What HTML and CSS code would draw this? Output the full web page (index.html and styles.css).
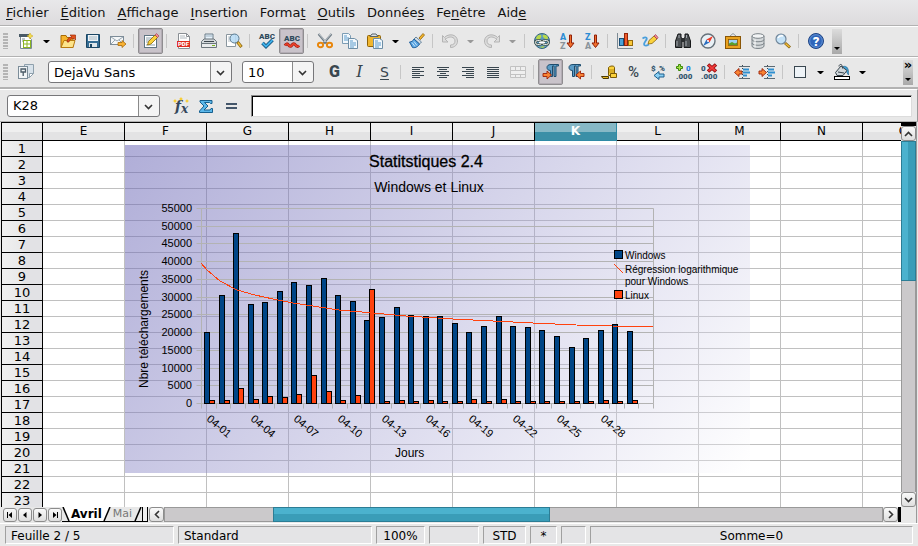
FILE: index.html
```html
<!DOCTYPE html>
<html lang="fr">
<head>
    <meta charset="UTF-8">
    <meta name="viewport" content="width=device-width, initial-scale=1.0">
    <title>Statistiques - Tableur</title>
    <link rel="stylesheet" href="styles.css">
</head>
<body>
    <nav class="menubar">
        <a href="#"><u>F</u>ichier</a>
        <a href="#"><u>É</u>dition</a>
        <a href="#"><u>A</u>ffichage</a>
        <a href="#"><u>I</u>nsertion</a>
        <a href="#">Forma<u>t</u></a>
        <a href="#"><u>O</u>utils</a>
        <a href="#">Donnée<u>s</u></a>
        <a href="#">Fe<u>n</u>être</a>
        <a href="#">Aid<u>e</u></a>
    </nav>

    <div class="toolbar">
        <span class="grip"></span>
        <button class="tool" aria-label="Nouveau"><svg viewBox="0 0 16 16"><path d="M2.500 3.500h8l3 3v9h-11z" fill="#fff" stroke="#7a8a94"/><path d="M1 1h10v3H1z" fill="#4a5a66"/><path d="M4 6h3M4 8h2" stroke="#7a8a94"/><rect x="5.500" y="7.500" width="7" height="7" fill="#fff" stroke="#8ab520"/><path d="M9 7v8M5 11h8" stroke="#8ab520"/><path d="M12 0l1 2 2 1-2 1-1 2-1-2-2-1 2-1z" fill="#f5e050" stroke="#c8a010" stroke-width=".5"/></svg></button>
        <button class="drop" aria-label="Types de document"></button>
        <button class="tool" aria-label="Ouvrir"><svg viewBox="0 0 16 16"><path d="M1 14.500V2.500h5l1 2h6v10z" fill="#f6b52c" stroke="#a86c08"/><path d="M1 14.500l3-7h11l-2 7z" fill="#fde48a" stroke="#b87a10"/><path d="M7 9c0-3 2-5 5-5l-2-2h5.500v5L14 5.500C11 5.500 9 7 9 9z" fill="#e2521c" stroke="#9c2c08" stroke-width=".7"/></svg></button>
        <button class="tool" aria-label="Enregistrer"><svg viewBox="0 0 16 16"><path d="M1.500 1.500h13v13h-13z" fill="#356d94" stroke="#1b4663"/><rect x="3" y="2" width="10" height="6" fill="#eef3f6"/><path d="M4 4h8M4 6h8" stroke="#a8b8c2"/><rect x="4" y="10" width="8" height="4" fill="#dfe6ea"/><rect x="5" y="11" width="2" height="3" fill="#1b4663"/></svg></button>
        <button class="tool" aria-label="Envoyer"><svg viewBox="0 0 16 16"><rect x=".5" y="3.500" width="13" height="8" fill="#f5f7f8" stroke="#7d8c98"/><path d="M1 4l6 4 6-4M1 11l4-4M13 11L9 7" fill="none" stroke="#9aa8b2"/><path d="M8 9.500h4v-2l4 3.500-4 3.500v-2H8z" fill="#f9b233" stroke="#a8690a" stroke-width=".8"/></svg></button>
        <span class="sep"></span>
        <button class="tool on" aria-label="Éditer le fichier"><svg viewBox="0 0 16 16"><rect x="1.500" y="2.500" width="12" height="12" fill="#fff" stroke="#5f7482"/><path d="M3 5h6M3 7h5M3 9h3M3 12h9" stroke="#8fa3af"/><path d="M4.500 12l1-3.500L12 2l2.500 2.500L8 11z" fill="#fbd23c" stroke="#8a6508" stroke-width=".8"/><path d="M12 2l1.500-1.500L16 3l-1.500 1.500z" fill="#f08c96" stroke="#a03848" stroke-width=".6"/></svg></button>
        <span class="sep"></span>
        <button class="tool" aria-label="Exporter en PDF"><svg viewBox="0 0 16 16"><path d="M2.500.5h8l3 3v12h-11z" fill="#fff" stroke="#8a8f94"/><path d="M10.500.5v3h3" fill="none" stroke="#8a8f94"/><path d="M4 3h5M4 5h7" stroke="#b0b8be"/><rect x="1" y="8" width="13" height="6" fill="#e02b20"/><text x="7.500" y="13" text-anchor="middle" class="ico-pdf">PDF</text></svg></button>
        <button class="tool" aria-label="Imprimer"><svg viewBox="0 0 16 16"><path d="M4 6V1h8v5" fill="#e6f1fa" stroke="#6a7c88"/><path d="M5 3h6" stroke="#9fb4c2"/><path d="M.5 8.500l2.500-2.500h10l2.500 2.500v3H.5z" fill="#d2d7da" stroke="#6b757b"/><path d="M3 8.500h10" stroke="#3c464c"/><path d="M.5 10.500h15v4H.5z" fill="#e9ebec" stroke="#6b757b"/><rect x="11" y="12" width="3" height="1" fill="#79b520"/></svg></button>
        <button class="tool" aria-label="Aperçu"><svg viewBox="0 0 16 16"><path d="M.5 1.500h9v12h-9z" fill="#fff" stroke="#8a969e"/><path d="M2 4h3M2 6h3M2 8h3" stroke="#b4bec4"/><circle cx="8.500" cy="5.500" r="4.500" fill="#b9dcf4" fill-opacity=".9" stroke="#5c7c92"/><path d="M11.500 9l4 5" stroke="#8a6510" stroke-width="3"/><path d="M12 9.500l3 4" stroke="#f0bc3a" stroke-width="1.500"/></svg></button>
        <span class="sep"></span>
        <button class="tool" aria-label="Orthographe"><svg viewBox="0 0 16 16"><text x="8" y="6" text-anchor="middle" class="ico-abc">ABC</text><path d="M3.500 10l3.500 3.500 6.500-6.500" fill="none" stroke="#13517c" stroke-width="3.600"/><path d="M3.500 10l3.500 3.500 6.500-6.500" fill="none" stroke="#3fb1ea" stroke-width="1.800"/></svg></button>
        <button class="tool on" aria-label="Vérification automatique"><svg viewBox="0 0 16 16"><text x="8" y="8" text-anchor="middle" class="ico-abc">ABC</text><path d="M1 12.500q1.800-3 3.500-.5t3.500 0 3.500 0 3.500.5" fill="none" stroke="#a81c10" stroke-width="3"/><path d="M1 12.500q1.800-3 3.500-.5t3.500 0 3.500 0 3.500.5" fill="none" stroke="#f0452c" stroke-width="1.400"/></svg></button>
        <span class="sep"></span>
        <button class="tool" aria-label="Couper"><svg viewBox="0 0 16 16"><path d="M1.500 1l8 9.500M14.500 1l-8 9.500" stroke="#6e7b84" stroke-width="2"/><path d="M2 1l7 8M14 1L7 9" stroke="#e4eaee" stroke-width=".7"/><ellipse cx="3.500" cy="12" rx="2.600" ry="2.200" fill="none" stroke="#e8860c" stroke-width="1.900"/><ellipse cx="12.500" cy="12" rx="2.600" ry="2.200" fill="none" stroke="#e8860c" stroke-width="1.900"/></svg></button>
        <button class="tool" aria-label="Copier"><svg viewBox="0 0 16 16"><path d="M.5.5h6l2 2v8h-8z" fill="#f2f8fc" stroke="#7d9db4"/><path d="M2 3h3M2 5h5M2 7h5" stroke="#5a9bcc"/><path d="M6.500 5.500h6l3 2v8h-9z" fill="#f2f8fc" stroke="#6d8ea6"/><path d="M8 8h3M8 10h6M8 12h6M8 14h4" stroke="#5a9bcc"/></svg></button>
        <button class="tool" aria-label="Coller"><svg viewBox="0 0 16 16"><rect x=".5" y="2.500" width="13" height="11" rx="1" fill="#f0b62e" stroke="#8f6206"/><path d="M3 3.500L5 1h4l2 2.500z" fill="#dfe3e6" stroke="#59646b"/><path d="M6.500 5.500h6l3 2v8h-9z" fill="#f2f8fc" stroke="#6d8ea6"/><path d="M8 8h3M8 10h6M8 12h6M8 14h4" stroke="#5a9bcc"/></svg></button>
        <button class="drop" aria-label="Options de collage"></button>
        <button class="tool" aria-label="Appliquer le format"><svg viewBox="0 0 16 16"><path d="M10 5l4-4.500 1.500 1.500-4 4.500z" fill="#f5b52a" stroke="#8f6206" stroke-width=".8"/><path d="M7 4l5.500 5-2 2L5 6z" fill="#d3dde4" stroke="#4b6f8c" stroke-width=".8"/><path d="M5 6l5.500 5c-2 3.500-5 4-7 3.500L.5 9c2 0 3.500-1 4.500-3z" fill="#5aa5e2" stroke="#1f5f9c"/><path d="M3 9.500l3 4M5 8.500l3 4" stroke="#c4e2f8"/></svg></button>
        <span class="sep"></span>
        <button class="tool" aria-label="Annuler" disabled><svg viewBox="0 0 16 16"><path d="M3 6l3 3H.500V2.500l2 2C6 .500 15 .500 15.500 8c0 4-3 6.500-7 6.500V12c3 0 4.500-1.500 4.500-4 0-4.500-6-5-8.500-2.500z" fill="#dcdcdc" stroke="#b4b4b4"/></svg></button>
        <button class="drop off" aria-label="Liste d'annulation" disabled></button>
        <button class="tool" aria-label="Rétablir" disabled><svg viewBox="0 0 16 16"><path d="M13 6l-3 3h5.500V2.500l-2 2C10 .500 1 .500.500 8c0 4 3 6.500 7 6.500V12C4.500 12 3 10.500 3 8c0-4.500 6-5 8.500-2.500z" fill="#dcdcdc" stroke="#b4b4b4"/></svg></button>
        <button class="drop off" aria-label="Liste de rétablissement" disabled></button>
        <span class="sep"></span>
        <button class="tool" aria-label="Hyperlien"><svg viewBox="0 0 16 16"><circle cx="8" cy="8" r="7.500" fill="#5b98c0" stroke="#34647f"/><path d="M2 5c1-3 4-4 5-3s0 3-1 4-4 1-4-1zM9 2c2-1 5 1 5 3s-3 1-4 0-2-2-1-3zM5 14l6-1-2 2z" fill="#b8d84a"/><rect x="1.500" y="7.500" width="6" height="4" rx="2" fill="none" stroke="#4c5a50" stroke-width="2.400"/><rect x="8.500" y="7.500" width="6" height="4" rx="2" fill="none" stroke="#4c5a50" stroke-width="2.400"/><rect x="1.500" y="7.500" width="6" height="4" rx="2" fill="none" stroke="#e6ecef"/><rect x="8.500" y="7.500" width="6" height="4" rx="2" fill="none" stroke="#e6ecef"/><path d="M5 9.500h6" stroke="#fff" stroke-width="1.400"/></svg></button>
        <button class="tool" aria-label="Tri croissant"><svg viewBox="0 0 16 16"><text x="1" y="7" class="ico-sort blue">A</text><text x="1" y="16" class="ico-sort">Z</text><path d="M10.500 2h2v8h2.500l-3.500 4.500L8 10h2.500z" fill="#f0702c" stroke="#8f1e08"/></svg></button>
        <button class="tool" aria-label="Tri décroissant"><svg viewBox="0 0 16 16"><text x="1" y="7" class="ico-sort blue">Z</text><text x="1" y="16" class="ico-sort">A</text><path d="M10.500 2h2v8h2.500l-3.500 4.500L8 10h2.500z" fill="#f0702c" stroke="#8f1e08"/></svg></button>
        <span class="sep"></span>
        <button class="tool" aria-label="Diagramme"><svg viewBox="0 0 16 16"><path d="M.5 0v15.500H16" fill="none" stroke="#7c8a94"/><rect x="2.500" y="5.500" width="4" height="7" fill="#4ba3d8" stroke="#1b5078"/><rect x="7.500" y=".5" width="3" height="12" fill="#ee5b2a" stroke="#93240a"/><rect x="11.500" y="7.500" width="4" height="5" fill="#fbc93a" stroke="#94690a"/></svg></button>
        <button class="tool" aria-label="Dessin"><svg viewBox="0 0 16 16"><path d="M.5 5.500c3-2 5-1 4 1s-4 5-1.500 6c2 .500 3-.500 4-1" fill="none" stroke="#4a9fdc" stroke-width="1.800"/><path d="M6 11l1-3.500L12 3l3 3-5 4.500z" fill="#fbd23c" stroke="#8a6508" stroke-width=".8"/><path d="M12 3l1.500-1.500 2.500 3L15 6z" fill="#f08c96" stroke="#a03848" stroke-width=".7"/></svg></button>
        <span class="sep"></span>
        <button class="tool" aria-label="Rechercher"><svg viewBox="0 0 16 16"><path d="M3 1h3v3l1 2v8.500H.5V8zM13 1h-3v3L9 6v8.500h6.500V8z" fill="#4b4f52" stroke="#17191a"/><path d="M6 5h4v4H6z" fill="#2b2e30"/><path d="M2 8v5M11 8v5M4 2v3M11.500 2v3" stroke="#a3a9ad"/></svg></button>
        <button class="tool" aria-label="Navigateur"><svg viewBox="0 0 16 16"><circle cx="8" cy="8" r="7" fill="#e9f1f6" stroke="#66727a" stroke-width="1.400"/><path d="M13 3L9.500 9.500 6.500 6.500z" fill="#ee3b28"/><path d="M3 13l3.500-6.500 3 3z" fill="#2c6fc0"/><circle cx="8" cy="8" r="1" fill="#fff"/></svg></button>
        <button class="tool" aria-label="Galerie"><svg viewBox="0 0 16 16"><path d="M5 3l3-2.500L11 3" fill="none" stroke="#8f9aa2"/><rect x=".5" y="3.500" width="15" height="12" fill="#e9a21e" stroke="#8a5606"/><rect x="3.500" y="6.500" width="9" height="6" fill="#9bd0f2" stroke="#8a5606" stroke-width=".8"/><path d="M4 12V10.500L7 9l3 1.500 2-1V12z" fill="#5a9e28"/></svg></button>
        <button class="tool" aria-label="Sources de données"><svg viewBox="0 0 16 16"><path d="M2 3v10c0 3.300 12 3.300 12 0V3z" fill="#d4d8da" stroke="#7b8388"/><ellipse cx="8" cy="3" rx="6" ry="2.300" fill="#f2f4f5" stroke="#7b8388"/><path d="M2 6.500c0 3 12 3 12 0M2 10c0 3 12 3 12 0" fill="none" stroke="#7b8388"/><path d="M5 6.500v8" stroke="#fff"/></svg></button>
        <button class="tool" aria-label="Zoom"><svg viewBox="0 0 16 16"><circle cx="6" cy="6" r="5" fill="#c4e2f7" stroke="#72879a" stroke-width="1.200"/><path d="M3 5c1-2 3-2.500 5-2" stroke="#fff" stroke-width="1.500" fill="none"/><path d="M10 10l5 4.500" stroke="#8a6510" stroke-width="3"/><path d="M10.500 10.500l4 3.500" stroke="#f0bc3a" stroke-width="1.500"/></svg></button>
        <span class="sep"></span>
        <button class="tool" aria-label="Aide"><svg viewBox="0 0 16 16"><circle cx="8" cy="8" r="7.500" fill="#2f66ba" stroke="#1e4484"/><circle cx="8" cy="8" r="6.300" fill="none" stroke="#7ba5e0" stroke-width=".7"/><text x="8" y="12.500" text-anchor="middle" class="ico-help">?</text></svg></button>
        <button class="more" aria-label="Plus de boutons"></button>
    </div>

    <div class="toolbar format">
        <span class="grip"></span>
        <button class="tool" aria-label="Styles et formatage"><svg viewBox="0 0 16 16"><path d="M6.500.5h9v9l-4 4h-5z" fill="#d8e2ea" stroke="#8fa0ac"/><path d="M15.500 9.500h-4v4z" fill="#fff" stroke="#8fa0ac"/><rect x=".5" y="2.500" width="9" height="12" fill="#f2f5f7" stroke="#7c8d99"/><path d="M3 5h4.500v3H3zM5.200 8v4" fill="none" stroke="#4c5c68" stroke-width="1.300"/></svg></button>
        <span class="combo font-name">
            <select aria-label="Nom de police"><option>DejaVu Sans</option></select>
            <svg class="chevron" viewBox="0 0 9 6"><path d="M1 1l3.500 3.500L8 1"/></svg>
        </span>
        <span class="combo font-size">
            <select aria-label="Taille de police"><option>10</option></select>
            <svg class="chevron" viewBox="0 0 9 6"><path d="M1 1l3.500 3.500L8 1"/></svg>
        </span>
        <button class="tool letter bold" aria-label="Gras">G</button>
        <button class="tool letter italic" aria-label="Italique">I</button>
        <button class="tool letter underline" aria-label="Souligné">S</button>
        <span class="sep"></span>
        <button class="tool" aria-label="Aligner à gauche"><svg viewBox="0 0 16 16"><path d="M2 3.500h12M2 5.500h8M2 7.500h12M2 9.500h8M2 11.500h12M2 13.500h8" stroke="#39464f"/></svg></button>
        <button class="tool" aria-label="Centrer"><svg viewBox="0 0 16 16"><path d="M2 3.500h12M4 5.500h8M2 7.500h12M5 9.500h6M2 11.500h12M4 13.500h8" stroke="#39464f"/></svg></button>
        <button class="tool" aria-label="Aligner à droite"><svg viewBox="0 0 16 16"><path d="M2 3.500h12M6 5.500h8M2 7.500h12M6 9.500h8M2 11.500h12M6 13.500h8" stroke="#39464f"/></svg></button>
        <button class="tool" aria-label="Justifier"><svg viewBox="0 0 16 16"><path d="M2 3.500h12M2 5.500h12M2 7.500h12M2 9.500h12M2 11.500h12M2 13.500h12" stroke="#39464f"/></svg></button>
        <button class="tool" aria-label="Fusionner" disabled><svg viewBox="0 0 16 16"><path d="M.5 2.500h15v11H.5zM.5 6.500h15M.5 10.500h15M5.500 2v4.500M10.500 2v4.500M5.500 10.500V14M10.500 10.500V14" fill="#efefef" stroke="#c2c2c2"/></svg></button>
        <span class="sep"></span>
        <button class="tool on" aria-label="De gauche à droite"><svg viewBox="0 0 16 16"><path d="M15.500.5H8C5 .5 4 2 4 3.500s1 3 3.500 3v6h2V2H11v10.500h2V2h2.500z" fill="#5b9cc6" stroke="#1d4c6e"/><path d="M0 9.500h4V7l4.500 4L4 15v-2.500H0z" fill="#f98434" stroke="#9c2008" stroke-width=".9"/></svg></button>
        <button class="tool" aria-label="De droite à gauche"><svg viewBox="0 0 16 16"><path d="M12.500.500H5C2 .500 1 2 1 3.500s1 3 3.500 3v6h2V2H8v10.500h2V2h2.500z" fill="#5b9cc6" stroke="#1d4c6e"/><path d="M16 9.500h-3.500V7L8 11l4.500 4v-2.500H16z" fill="#f98434" stroke="#9c2008" stroke-width=".9"/></svg></button>
        <span class="sep"></span>
        <button class="tool" aria-label="Format monétaire"><svg viewBox="0 0 16 16"><path d="M7.500 3.500c1.500-2 6-2 6 0v8h-6z" fill="#fbd23c" stroke="#7a5a06"/><path d="M8 6h5M8 8h5" stroke="#b98a10"/><path d="M.5 12.500h7v2H2z" fill="#e8b820" stroke="#4a3a06"/><path d="M9.500 9.500h6v4h-6z" fill="#fbd23c" stroke="#7a5a06"/></svg></button>
        <button class="tool letter percent" aria-label="Format pourcentage">%</button>
        <button class="tool" aria-label="Format standard"><svg viewBox="0 0 16 16"><text x="0" y="7" class="ico-num">$</text><text x="8" y="7" class="ico-num">%</text><path d="M13 10H8V7.500L3 11.500l5 4V13h5z" fill="#8ad0f4" stroke="#1c5f8c"/></svg></button>
        <button class="tool" aria-label="Ajouter une décimale"><svg viewBox="0 0 16 16"><path d="M2.500.5h2v2h2v2h-2v2h-2v-2h-2v-2h2z" fill="#a6e04a" stroke="#3c8a08"/><text x="10" y="7" class="ico-num blue">0</text><text x="0" y="15" class="ico-num">.000</text></svg></button>
        <button class="tool" aria-label="Supprimer une décimale"><svg viewBox="0 0 16 16"><text x="0" y="7" class="ico-num">0</text><text x="0" y="15" class="ico-num">.000</text><path d="M7 .5l8 7M15 .5l-8 7" stroke="#8f0c0c" stroke-width="3.600"/><path d="M7.500 1l7 6M14.500 1l-7 6" stroke="#f03a3a" stroke-width="1.800"/></svg></button>
        <span class="sep"></span>
        <button class="tool" aria-label="Réduire le retrait"><svg viewBox="0 0 16 16"><path d="M5 2.500h11M5 14.500h11" stroke="#5b6a74"/><path d="M9 5.500h6M9 8.500h7M9 11.500h4" stroke="#2f8fd0" stroke-width="2"/><path d="M8 7H5V4.500L.5 8.500 5 12.500V10h3z" fill="#f98434" stroke="#9c2008" stroke-width=".9"/><path d="M8.500 1v15" stroke="#39464f" stroke-dasharray="1 2"/></svg></button>
        <button class="tool" aria-label="Augmenter le retrait"><svg viewBox="0 0 16 16"><path d="M5 2.500h11M5 14.500h11" stroke="#5b6a74"/><path d="M9 5.500h6M9 8.500h7M9 11.500h4" stroke="#2f8fd0" stroke-width="2"/><path d="M0 7h3V4.500l4.500 4-4.500 4V10H0z" fill="#f98434" stroke="#9c2008" stroke-width=".9"/><path d="M8.500 1v15" stroke="#39464f" stroke-dasharray="1 2"/></svg></button>
        <span class="sep"></span>
        <button class="tool" aria-label="Bordures"><svg viewBox="0 0 16 16"><rect x="2.500" y="2.500" width="11" height="11" fill="#eef3f7" stroke="#39464f"/></svg></button>
        <button class="drop" aria-label="Choix des bordures"></button>
        <button class="tool" aria-label="Couleur d'arrière-plan"><svg viewBox="0 0 16 16"><path d="M9 2.500c4-1 6 2 5.500 8.500-1-1-2-4-4-4.500z" fill="#3f9fd4" stroke="#2a6a92" stroke-width=".7"/><path d="M1.500 8.500L7 2l6 4.500-4 5H3z" fill="#cfd6da" stroke="#39464f"/><path d="M4 8l6 1M5 2.500c0-3 4-3 3.500 2" fill="none" stroke="#39464f"/><rect x=".5" y="12.500" width="15" height="3" fill="#fff" stroke="#000"/></svg></button>
        <button class="drop" aria-label="Choix de la couleur"></button>
        <button class="more wide" aria-label="Plus de boutons"><span>»</span></button>
    </div>

    <div class="formula-bar">
        <span class="combo name-box">
            <input type="text" value="K28" aria-label="Zone de nom">
            <svg class="chevron" viewBox="0 0 9 6"><path d="M1 1l3.500 3.500L8 1"/></svg>
        </span>
        <div class="formula-tools">
            <button class="tool" aria-label="Assistant fonctions"><svg viewBox="0 0 16 16"><text x="2" y="13" class="ico-fx">f</text><text x="8" y="15" class="ico-fx small">x</text><path d="M2 1l1 1.500L4.500 3 3 3.500 2 5 1 3.500-.5 3 1 2.500zM8-1l.8 1.200L10 1l-1.200.8L8 3l-.8-1.200L6 1l1.200-.8zM14 1l.7 1.300L16 3l-1.300.7L14 5l-.7-1.300L12 3l1.300-.7z" fill="#f8cc2a"/></svg></button>
            <button class="tool" aria-label="Somme"><svg viewBox="0 0 16 16"><path d="M2 2.500h12v3h-1.500l-1-1H6.500L10 8l-4 4h6l1-1.500h1.500v4H1.500V13L6 8 2 4z" fill="#5cb8ea" stroke="#17608f"/></svg></button>
            <button class="tool" aria-label="Fonction"><svg viewBox="0 0 16 16"><path d="M3 6h11M3 10h11" stroke="#44566a" stroke-width="2"/></svg></button>
        </div>
        <input type="text" class="formula-input" aria-label="Ligne de saisie">
    </div>

    <main class="workspace">
        <div class="sheet-row">
            <div class="sheet">
                <table>
                    <thead><tr id="columns"></tr></thead>
                    <tbody id="rows"></tbody>
                </table>
                <svg class="chart" id="chart" viewBox="0 0 625 328" role="img" aria-label="Windows et Linux">
                    <g id="axis" class="axis"></g>
                    <g id="bars" class="bars"></g>
                    <polyline class="trend" points="76,118 82,125 95,136 112,145 130,150 148,154 168,158 181,160 214,165 248,168 281,171 328,174 368,176 408,178 451,180 487,181 528,182"/>
                    <text class="title" x="301" y="22">Statitstiques 2.4</text>
                    <text class="subtitle" x="304" y="47">Windows et Linux</text>
                    <text class="axis-title" x="270" y="312">Jours</text>
                    <text class="axis-title" transform="translate(23 243) rotate(-90)">Nbre téléchargements</text>
                    <g class="legend">
                        <rect x="489" y="105" width="8" height="8" class="win"/>
                        <text x="500" y="114">Windows</text>
                        <path d="M489 119l9 9" class="trend"/>
                        <text x="500" y="128">Régression logarithmique</text>
                        <text x="500" y="140">pour Windows</text>
                        <rect x="489" y="145" width="8" height="8" class="lin"/>
                        <text x="500" y="154">Linux</text>
                    </g>
                </svg>
            </div>
            <div class="vscroll">
                <span class="split"></span>
                <button aria-label="Haut"><svg viewBox="0 0 9 6"><path d="M1 5l3.500-3.500L8 5"/></svg></button>
                <div class="track"><div class="thumb"></div></div>
                <button aria-label="Bas"><svg viewBox="0 0 9 6"><path d="M1 1l3.500 3.500L8 1"/></svg></button>
            </div>
        </div>
        <div class="tab-row">
            <div class="tab-nav">
                <button aria-label="Première feuille"><svg viewBox="0 0 8 8"><path d="M1 1h1v6H1zM6 1v6L2.500 4z"/></svg></button>
                <button aria-label="Feuille précédente"><svg viewBox="0 0 8 8"><path d="M5.500 1v6L2 4z"/></svg></button>
                <button aria-label="Feuille suivante"><svg viewBox="0 0 8 8"><path d="M2.500 1v6L6 4z"/></svg></button>
                <button aria-label="Dernière feuille"><svg viewBox="0 0 8 8"><path d="M6 1h1v6H6zM2 1v6l3.500-3z"/></svg></button>
            </div>
            <div class="tabs">
                <svg viewBox="0 0 8 14"><path d="M1 0l6 14h1V0z" fill="#fff"/><path d="M1 0l6 14"/></svg>
                <button class="tab active">Avril</button>
                <svg viewBox="0 0 8 14"><path d="M0 14V0h7L1 14z" fill="#fff"/><path d="M7 0L1 14"/></svg>
                <button class="tab">Mai</button>
                <svg viewBox="0 0 8 14"><path d="M7 0L1 14"/></svg>
            </div>
            <span class="tab-split"></span>
            <div class="hscroll">
                <button aria-label="Gauche"><svg viewBox="0 0 6 9"><path d="M5 1L1.500 4.500 5 8"/></svg></button>
                <div class="track"><div class="thumb"></div></div>
                <button aria-label="Droite"><svg viewBox="0 0 6 9"><path d="M1 1l3.500 3.500L1 8"/></svg></button>
            </div>
            <span class="split"></span>
        </div>
    </main>

    <footer class="statusbar">
        <span>Feuille 2 / 5</span>
        <span>Standard</span>
        <span class="mid">100%</span>
        <span></span>
        <span class="mid">STD</span>
        <span class="mid">*</span>
        <span></span>
        <span class="mid">Somme=0</span>
    </footer>

    <script>
        const COLUMNS = ['E', 'F', 'G', 'H', 'I', 'J', 'K', 'L', 'M', 'N', 'O'];
        const ROW_COUNT = 23;
        const SELECTED = 'K';

        // téléchargements par jour
        const windowsData = [20000, 30500, 48000, 28000, 28500, 31500, 34000, 33400, 35300, 30500, 28800, 23400, 24300, 27200, 24900, 24600, 24600, 22600, 20000, 21700, 24600, 21700, 21400, 20600, 18900, 15800, 18300, 20600, 22300, 20300];
        const linuxData = [800, 800, 4200, 1100, 2000, 1700, 2500, 7800, 3400, 800, 2200, 32200, 500, 800, 500, 800, 500, 500, 1100, 500, 1100, 500, 500, 500, 500, 500, 500, 800, 500, 800];

        function buildSheet() {
            let head = '<th class="corner"></th>';
            COLUMNS.forEach(c => {
                head += `<th class="col${c === SELECTED ? ' selected' : ''}">${c}</th>`;
            });
            document.getElementById('columns').innerHTML = head;

            let body = '';
            for (let r = 1; r <= ROW_COUNT; r++) {
                body += `<tr><th>${r}</th>${'<td></td>'.repeat(COLUMNS.length)}</tr>`;
            }
            document.getElementById('rows').innerHTML = body;
        }

        function buildChart() {
            const left = 76, right = 528, top = 63, bottom = 258;
            const max = 55000;
            const step = (right - left) / 31;
            const y = v => Math.round(bottom - v / max * (bottom - top));

            let axis = '';
            for (let v = 0; v <= max; v += 5000) {
                axis += `<path d="M${left - 5} ${y(v)}H${right}"/>`;
                axis += `<text x="67" y="${y(v) + 4}" text-anchor="end">${v}</text>`;
            }
            axis += `<path d="M${left} ${top}V${bottom}M${right} ${top}V${bottom}"/>`;
            for (let i = 0; i <= 31; i++) {
                axis += `<path d="M${Math.round(left + i * step)} ${bottom}v5"/>`;
            }
            for (let i = 0; i < 30; i += 3) {
                const day = String(i + 1).padStart(2, '0');
                axis += `<text transform="translate(${Math.round(left + i * step) + 5} 275) rotate(40)">04-${day}</text>`;
            }
            document.getElementById('axis').innerHTML = axis;

            let bars = '';
            windowsData.forEach((value, i) => {
                const x = Math.round(left + i * step) + 3;
                const other = linuxData[i];
                bars += `<rect class="win" x="${x}" y="${y(value)}" width="5" height="${bottom - y(value)}"/>`;
                bars += `<rect class="lin" x="${x + 5}" y="${y(other)}" width="5" height="${bottom - y(other)}"/>`;
            });
            document.getElementById('bars').innerHTML = bars;
        }

        buildSheet();
        buildChart();
    </script>
</body>
</html>
```
FILE: styles.css
```css
:root {
    --line: #b2b2b2;
    --bg: #e8e8e8;
    --teal-dark: #2f8ba6;
    --grid: #c0c0c0;
    --ink: #39464f;
}

* {
    box-sizing: border-box;
}

body {
    margin: 0;
    height: 100vh;
    display: flex;
    flex-direction: column;
    overflow: hidden;
    background-color: var(--bg);
    font-family: 'DejaVu Sans', sans-serif;
    font-size: 13px;
    color: #000;
}

button, input, select {
    font: inherit;
    color: inherit;
    margin: 0;
    padding: 0;
    border: none;
    background: none;
}

svg {
    display: block;
}

/* menu */
.menubar {
    display: flex;
    gap: 12px;
    padding: 0 6px;
    line-height: 25px;
    background: linear-gradient(#e8e8ea, #dddbdd);
    border-bottom: 1px solid var(--line);
}

.menubar a {
    color: #111;
    text-decoration: none;
}

.menubar u {
    text-underline-offset: 2px;
}

/* toolbars */
.toolbar {
    display: flex;
    align-items: center;
    padding: 1px 5px 2px 3px;
    border-top: 1px solid #fff;
    border-bottom: 1px solid var(--line);
}

.toolbar.format {
    border-bottom-width: 2px;
}

.grip {
    width: 5px;
    height: 16px;
    margin-right: 5px;
    background-image: radial-gradient(circle at 1px 1px, #b4b4b4 35%, transparent 60%);
    background-size: 2px 3px;
}

.tool {
    flex: none;
    width: 25px;
    height: 26px;
    padding: 0 4px 0 5px;
    border-radius: 2px;
}

.tool svg {
    width: 16px;
    height: 16px;
    overflow: visible;
}

.tool.on {
    border: 1px solid #8f8d90;
    padding: 0 3px 0 4px;
    background-color: #c9c3ca;
    box-shadow: inset 0 0 0 1px #b3adb4;
}

.drop {
    width: 17px;
    height: 26px;
    padding: 0 5px;
}

.drop::before, .more::after {
    content: '';
    display: block;
    border: 3px solid transparent;
    border-top: 3px solid #000;
    border-bottom: none;
}

.drop.off::before {
    border-top-color: #999;
}

.sep {
    width: 1px;
    height: 14px;
    margin: 0 4px 0 3px;
    background-color: #c6c6c6;
}

.more {
    display: flex;
    flex-direction: column;
    align-items: center;
    justify-content: flex-end;
    width: 10px;
    height: 25px;
    margin-left: 4px;
    padding-bottom: 4px;
    background: linear-gradient(#dcdcdc, #a9a9a9);
}

.more.wide {
    margin-left: auto;
    justify-content: space-between;
    line-height: 10px;
    font-weight: bold;
}

.letter {
    padding: 0;
    font-size: 16px;
    line-height: 24px;
    color: var(--ink);
}

.letter.bold {
    font-family: Roboto, sans-serif;
    font-weight: 900;
}

.letter.italic {
    font-family: 'DejaVu Serif', serif;
    font-style: italic;
}

.letter.underline {
    font-size: 14px;
    text-decoration: underline;
    text-underline-offset: 2px;
}

.letter.percent {
    font-family: Roboto, sans-serif;
    font-weight: 500;
    font-size: 15px;
}

.combo {
    position: relative;
    display: flex;
    height: 22px;
    border: 1px solid #77777a;
    border-radius: 3px;
    background: linear-gradient(to right, transparent calc(100% - 21px), #8a8a8a calc(100% - 21px), #8a8a8a calc(100% - 20px), #f4f4f4 calc(100% - 20px)) #fff;
}

.combo select, .combo input {
    appearance: none;
    width: 100%;
    padding: 0 22px 0 5px;
    outline: none;
}

.chevron {
    position: absolute;
    right: 6px;
    top: 8px;
    width: 9px;
    height: 6px;
    pointer-events: none;
}

.chevron path, .vscroll path, .hscroll path {
    fill: none;
    stroke: #333;
    stroke-width: 1.6;
}

.font-name {
    width: 184px;
    margin: 0 10px;
}

.font-size {
    width: 72px;
    margin-right: 8px;
}

/* text inside icons */
.ico-pdf, .ico-abc, .ico-sort, .ico-num, .ico-help {
    font-family: Roboto, sans-serif;
    font-weight: 900;
}

.ico-pdf { font-size: 6px; fill: #fff; }
.ico-abc { font-size: 8px; fill: #2f4a5c; }
.ico-sort { font-size: 9px; fill: #8a949b; }
.ico-num { font-size: 8px; fill: #34566e; }
.ico-help { font-size: 13px; fill: #fff; }
.ico-sort.blue { fill: #2c8cd4; }
.ico-num.blue { fill: #2c7ce0; }

.ico-fx {
    font-family: 'DejaVu Serif', serif;
    font-style: italic;
    font-weight: bold;
    font-size: 14px;
    fill: #34465a;
}

.ico-fx.small {
    font-size: 12px;
}

/* formula bar */
.formula-bar {
    display: flex;
    align-items: center;
    gap: 8px;
    padding: 4px 5px 4px 7px;
    border-top: 1px solid #fff;
    border-bottom: 1px solid var(--line);
    border-right: 1px solid #999;
}

.name-box {
    width: 153px;
}

.formula-tools {
    display: flex;
    height: 23px;
    align-items: center;
}

.formula-input {
    flex: 1;
    height: 22px;
    padding: 0 4px;
    background-color: #fff;
    border: 1px solid #dcdcdc;
    border-top-color: #888;
    border-left-color: #888;
    box-shadow: inset 1px 1px 0 #000;
    outline: none;
}

/* sheet */
.workspace {
    flex: 1;
    min-height: 0;
    display: flex;
    flex-direction: column;
    margin: 0 1px;
    border-right: 1px solid #999;
}

.sheet-row {
    flex: 1;
    min-height: 0;
    display: flex;
}

.sheet {
    position: relative;
    flex: 1;
    min-width: 0;
    overflow: hidden;
    background-color: #fff;
    border-top: 1px solid #000;
    border-left: 1px solid #000;
}

table {
    width: 943px;
    table-layout: fixed;
    border-spacing: 0;
}

td, th {
    height: 16px;
    padding: 0;
    line-height: 15px;
    border-right: 1px solid var(--grid);
    border-bottom: 1px solid var(--grid);
}

th {
    font-weight: normal;
    border-color: #000;
    background: linear-gradient(to right, #f0f0f0, #e9e9ea 45%, #e2e2e5 60%);
}

.corner {
    width: 41px;
}

.col, .corner {
    height: 18px;
    font-size: 12px;
    background: linear-gradient(#efefef 50%, #e3e3e4 50%);
}

.col.selected {
    color: #fff;
    font-weight: bold;
    border-color: var(--teal-dark);
    background: linear-gradient(#86b8c6 50%, #3b8fa7 50%);
}

/* chart floats over the cells */
.chart {
    position: absolute;
    left: 123px;
    top: 22px;
    width: 625px;
    height: 328px;
    background: linear-gradient(130deg, rgba(97, 93, 177, 0.5), rgba(255, 255, 255, 0.3));
    font-family: 'Liberation Sans', sans-serif;
    font-size: 11px;
}

.axis path {
    fill: none;
    stroke: #b3b3b3;
    transform: translate(0.5px, 0.5px);
}

.bars rect, .legend rect {
    stroke: #000;
    transform: translate(0.5px, 0.5px);
}

.win { fill: #004586; }
.lin { fill: #ff420e; }

.legend {
    font-size: 10px;
}

.trend {
    fill: none;
    stroke: #ff420e;
    shape-rendering: crispEdges;
}

.title {
    font-size: 16px;
    text-anchor: middle;
    stroke: #000;
    stroke-width: 0.3px;
}

.subtitle {
    font-size: 14px;
    text-anchor: middle;
}

.axis-title {
    font-size: 12px;
}

/* scrollbars */
.vscroll {
    display: flex;
    flex-direction: column;
    width: 15px;
}

.vscroll button, .hscroll button, .tab-nav button {
    display: flex;
    align-items: center;
    justify-content: center;
    flex: none;
    width: 15px;
    height: 15px;
    border: 1px solid #8c8c8c;
    border-radius: 3px;
    background: linear-gradient(#fafafa, #dedede);
}

.vscroll svg { width: 9px; height: 6px; }
.hscroll svg { width: 6px; height: 9px; }

.vscroll .split {
    height: 4px;
    background-color: #000;
}

.track {
    flex: 1;
    background-color: #cbc9cb;
    border: 1px solid #999;
}

.vscroll .track {
    border-width: 0 1px;
}

.vscroll .thumb {
    height: 40%;
    margin: 0 -1px;
    border: 1px solid #2c7d95;
    background: linear-gradient(to right, #4bb2ce 45%, #3a9db8 50%);
}

.tab-row {
    display: flex;
    height: 16px;
    padding-right: 15px;
}

.tab-nav {
    display: flex;
    gap: 1px;
    padding: 1px 0 0 2px;
}

.tab-nav button {
    width: 14px;
    height: 14px;
}

.tab-nav svg {
    width: 8px;
    height: 8px;
}

.tabs {
    display: flex;
    height: 15px;
    border-bottom: 1px solid #000;
}

.tabs svg {
    width: 8px;
    height: 14px;
}

.tabs svg path:last-child {
    fill: none;
    stroke: #000;
    stroke-width: 1.5;
}

.tab {
    padding: 0 2px;
    font-size: 11px;
    line-height: 14px;
    color: #777;
}

.tab.active {
    padding: 0 1px;
    font-size: 12px;
    font-weight: bold;
    color: #000;
    background-color: #fff;
}

.tab-split {
    width: 6px;
    height: 15px;
    margin-right: 1px;
    background-color: #eee;
    border: 1px solid #000;
    border-top: none;
}

.hscroll {
    flex: 1;
    display: flex;
    height: 15px;
}

.hscroll .thumb {
    width: 277px;
    height: 15px;
    margin: -1px 0 0 15%;
    border: 1px solid #2c7d95;
    background: linear-gradient(#4bb2ce 45%, #3a9db8 50%);
}

.tab-row > .split {
    width: 3px;
    height: 15px;
    background-color: #000;
}

/* status bar */
.statusbar {
    display: grid;
    grid-template-columns: 169px 194px 49px 50px 43px 27px 25px 1fr;
    gap: 4px;
    padding: 2px 5px;
    border-top: 1px solid #fff;
    font-size: 12px;
}

.statusbar span {
    height: 18px;
    padding: 0 5px;
    line-height: 18px;
    background-color: #e4e4e6;
    border: 1px solid #fff;
    border-top-color: #a0a0a0;
    border-left-color: #a0a0a0;
}

.statusbar .mid {
    text-align: center;
}
```
